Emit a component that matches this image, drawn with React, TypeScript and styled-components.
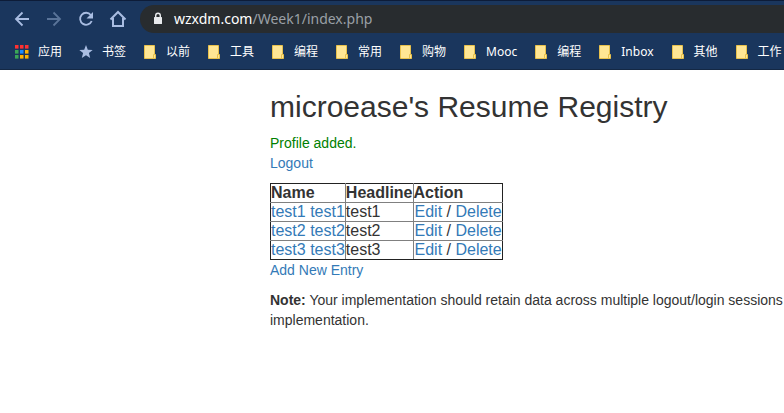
import React from "react";
import styled, { createGlobalStyle } from "styled-components";

const GlobalStyle = createGlobalStyle`
  * { box-sizing: border-box; }
  body {
    margin: 0;
    background: #fff;
    color: #333;
    font-family: "Liberation Sans", Arial, sans-serif;
    font-size: 14px;
    line-height: 20px;
    overflow-x: hidden;
  }
`;

const Chrome = styled.header`
  background: #1a365d;
  border-top: 1px solid #0d1c38;
  border-bottom: 1px solid #142844;
  font-family: "Noto Sans", "Noto Sans CJK SC", sans-serif;
  overflow: hidden;
`;

const Toolbar = styled.div`
  display: flex;
  align-items: center;
  gap: 10px;
  padding: 4px 0 0 10px;
`;

const NavButtons = styled.div`
  display: flex;
  gap: 8px;
`;

const NavButton = styled.button<{ $dim?: boolean }>`
  display: flex;
  align-items: center;
  justify-content: center;
  width: 24px;
  height: 28px;
  padding: 0;
  border: 0;
  background: none;
  color: ${(p) => (p.$dim ? "#5a7499" : "#a9bde2")};
`;

const AddressBar = styled.div`
  display: flex;
  flex: 1;
  align-items: center;
  gap: 10px;
  height: 28px;
  padding-left: 12px;
  border-radius: 14px 0 0 14px;
  background: #282c2f;
  color: #e8eaed;
`;

const Address = styled.a`
  color: #9aa0a6;
  font-family: "Noto Sans", sans-serif;
  font-size: 14px;
  line-height: 20px;
  text-decoration: none;
`;

const Host = styled.span`
  color: #fff;
`;

const Bookmarks = styled.nav`
  display: flex;
  align-items: center;
  gap: 16px;
  height: 36px;
  padding: 1px 0 0 14px;
`;

const Bookmark = styled.a`
  display: flex;
  flex: none;
  align-items: center;
  gap: 8px;
  color: #fff;
  font-size: 12px;
  line-height: 18px;
  text-decoration: none;
  white-space: nowrap;
`;

const Page = styled.main`
  padding: 20px 0 0 270px;
`;

const Title = styled.h1`
  margin: 0 0 10px;
  font-size: 30px;
  font-weight: 400;
  line-height: 33px;
`;

const Message = styled.p`
  margin: 0;
  color: green;
`;

const Paragraph = styled.p`
  margin: 0 0 10px;
  white-space: nowrap;
`;

const Link = styled.a`
  color: #337ab7;
  text-decoration: none;
`;

const Registry = styled.table`
  border: 1px solid #222;
  border-collapse: collapse;
  font-size: 16px;
  line-height: 18px;
`;

const Heading = styled.th`
  padding: 0;
  border: 1px solid #808080;
  border-top-color: #222;
  text-align: left;
  &:first-child { border-left-color: #222; }
  &:last-child { border-right-color: #222; }
`;

const Cell = styled.td`
  padding: 0;
  border: 1px solid #808080;
  &:first-child { border-left-color: #222; }
  &:last-child { padding-left: 1px; border-right-color: #222; }
  tr:last-child > & { border-bottom-color: #222; }
`;

const BackIcon = () => (
  <svg width="16" height="16" viewBox="0 0 16 16" fill="none" stroke="currentColor" strokeWidth="1.800">
    <path d="M15 8H2.5M8.5 1.5L2 8l6.500 6.500" />
  </svg>
);

const ForwardIcon = () => (
  <svg width="16" height="16" viewBox="0 0 16 16" fill="none" stroke="currentColor" strokeWidth="1.800">
    <path d="M1 8h12.500M7.500 1.500L14 8l-6.500 6.500" />
  </svg>
);

const ReloadIcon = () => (
  <svg width="16" height="16" viewBox="0 0 16 16">
    <path d="M12.800 4A6 6 0 1 0 13.700 10" fill="none" stroke="currentColor" strokeWidth="1.800" />
    <path d="M15 1v6.500H8.500z" fill="currentColor" />
  </svg>
);

const HomeIcon = () => (
  <svg width="18" height="18" viewBox="0 0 18 18" fill="none" stroke="currentColor" strokeWidth="2">
    <path d="M1.500 9.500L9 2l7.500 7.500M4 8v8h10V8" />
  </svg>
);

const LockIcon = () => (
  <svg width="12" height="14" viewBox="0 0 12 14">
    <rect x="2" y="5" width="8" height="7" rx="0.500" fill="currentColor" />
    <path d="M3.700 5.500V3.500a2.300 2.300 0 0 1 4.600 0v2" fill="none" stroke="currentColor" strokeWidth="1.400" />
  </svg>
);

const appColors = ["#ff3131", "#ff3131", "#ff3131", "#3aa757", "#1a8cff", "#ffb300", "#3aa757", "#ffb300", "#ffb300"];

const AppsIcon = () => (
  <svg width="16" height="16" viewBox="0 0 16 16">
    {appColors.map((color, i) => (
      <rect key={i} x={1 + (i % 3) * 5} y={1 + Math.floor(i / 3) * 5} width="3.500" height="3.600" fill={color} />
    ))}
  </svg>
);

const StarIcon = () => (
  <svg width="16" height="16" viewBox="0 0 16 16">
    <path d="M8 1l1.800 4.700 4.900.3-3.800 3.100 1.300 4.900L8 11.300 3.800 14l1.300-4.900L1.300 6l4.900-.3z" fill="#a9bde2" />
  </svg>
);

const FolderIcon = () => (
  <svg width="16" height="16" viewBox="0 0 16 16">
    <path d="M2.500 1.500h10v9h1v4h-11z" fill="#ffe694" stroke="#e8c14c" />
    <path d="M11.500 14v-3.500h1.500" fill="none" stroke="#e8c14c" />
  </svg>
);

const bookmarks = [
  { label: "应用", Icon: AppsIcon },
  { label: "书签", Icon: StarIcon },
  ...["以前", "工具", "编程", "常用", "购物", "Mooc", "编程", "Inbox", "其他", "工作"].map((label) => ({
    label,
    Icon: FolderIcon,
  })),
];

const profiles = [1, 2, 3].map((n) => ({ name: `test${n} test${n}`, headline: `test${n}` }));

export default function App() {
  return (
    <>
      <GlobalStyle />
      <Chrome>
        <Toolbar>
          <NavButtons>
            <NavButton aria-label="Back"><BackIcon /></NavButton>
            <NavButton aria-label="Forward" $dim><ForwardIcon /></NavButton>
            <NavButton aria-label="Reload"><ReloadIcon /></NavButton>
            <NavButton aria-label="Home"><HomeIcon /></NavButton>
          </NavButtons>
          <AddressBar>
            <LockIcon />
            <Address href="#"><Host>wzxdm.com</Host>/Week1/index.php</Address>
          </AddressBar>
        </Toolbar>
        <Bookmarks>
          {bookmarks.map(({ label, Icon }, i) => (
            <Bookmark key={i} href="#"><Icon />{label}</Bookmark>
          ))}
        </Bookmarks>
      </Chrome>
      <Page>
        <Title>microease's Resume Registry</Title>
        <Message>Profile added.</Message>
        <Paragraph><Link href="#">Logout</Link></Paragraph>
        <Registry>
          <thead>
            <tr><Heading>Name</Heading><Heading>Headline</Heading><Heading>Action</Heading></tr>
          </thead>
          <tbody>
            {profiles.map(({ name, headline }) => (
              <tr key={name}>
                <Cell><Link href="#">{name}</Link></Cell>
                <Cell>{headline}</Cell>
                <Cell><Link href="#">Edit</Link> / <Link href="#">Delete</Link></Cell>
              </tr>
            ))}
          </tbody>
        </Registry>
        <Paragraph><Link href="#">Add New Entry</Link></Paragraph>
        <Paragraph>
          <b>Note:</b> Your implementation should retain data across multiple logout/login sessions<br />
          implementation.
        </Paragraph>
      </Page>
    </>
  );
}
